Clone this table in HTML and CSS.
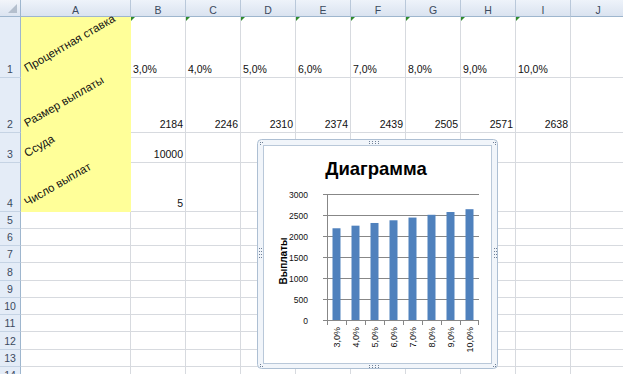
FILE: index.html
```html
<!DOCTYPE html>
<html lang="ru">
<head>
<meta charset="utf-8">
<title>Диаграмма</title>
<link rel="stylesheet" href="styles.css">
</head>
<body>
<div class="sheet">
  <div class="corner"></div>
  <div class="ch">A</div><div class="ch">B</div><div class="ch">C</div><div class="ch">D</div><div class="ch">E</div><div class="ch">F</div><div class="ch">G</div><div class="ch">H</div><div class="ch">I</div><div class="ch">J</div>

  <div class="rh">1</div>
  <div class="c y"><span class="rot">Процентная ставка</span></div>
  <div class="c f">3,0%</div><div class="c f">4,0%</div><div class="c f">5,0%</div><div class="c f">6,0%</div><div class="c f">7,0%</div><div class="c f">8,0%</div><div class="c f">9,0%</div><div class="c f">10,0%</div><div class="c"></div>

  <div class="rh">2</div>
  <div class="c y"><span class="rot">Размер выплаты</span></div>
  <div class="c r">2184</div><div class="c r">2246</div><div class="c r">2310</div><div class="c r">2374</div><div class="c r">2439</div><div class="c r">2505</div><div class="c r">2571</div><div class="c r">2638</div><div class="c"></div>

  <div class="rh">3</div>
  <div class="c y"><span class="rot">Ссуда</span></div>
  <div class="c r">10000</div><div class="c"></div><div class="c"></div><div class="c"></div><div class="c"></div><div class="c"></div><div class="c"></div><div class="c"></div><div class="c"></div>

  <div class="rh">4</div>
  <div class="c y"><span class="rot">Число выплат</span></div>
  <div class="c r">5</div><div class="c"></div><div class="c"></div><div class="c"></div><div class="c"></div><div class="c"></div><div class="c"></div><div class="c"></div><div class="c"></div>

  <div class="rh">5</div><div class="c"></div><div class="c"></div><div class="c"></div><div class="c"></div><div class="c"></div><div class="c"></div><div class="c"></div><div class="c"></div><div class="c"></div><div class="c"></div>
  <div class="rh">6</div><div class="c"></div><div class="c"></div><div class="c"></div><div class="c"></div><div class="c"></div><div class="c"></div><div class="c"></div><div class="c"></div><div class="c"></div><div class="c"></div>
  <div class="rh">7</div><div class="c"></div><div class="c"></div><div class="c"></div><div class="c"></div><div class="c"></div><div class="c"></div><div class="c"></div><div class="c"></div><div class="c"></div><div class="c"></div>
  <div class="rh">8</div><div class="c"></div><div class="c"></div><div class="c"></div><div class="c"></div><div class="c"></div><div class="c"></div><div class="c"></div><div class="c"></div><div class="c"></div><div class="c"></div>
  <div class="rh">9</div><div class="c"></div><div class="c"></div><div class="c"></div><div class="c"></div><div class="c"></div><div class="c"></div><div class="c"></div><div class="c"></div><div class="c"></div><div class="c"></div>
  <div class="rh">10</div><div class="c"></div><div class="c"></div><div class="c"></div><div class="c"></div><div class="c"></div><div class="c"></div><div class="c"></div><div class="c"></div><div class="c"></div><div class="c"></div>
  <div class="rh">11</div><div class="c"></div><div class="c"></div><div class="c"></div><div class="c"></div><div class="c"></div><div class="c"></div><div class="c"></div><div class="c"></div><div class="c"></div><div class="c"></div>
  <div class="rh">12</div><div class="c"></div><div class="c"></div><div class="c"></div><div class="c"></div><div class="c"></div><div class="c"></div><div class="c"></div><div class="c"></div><div class="c"></div><div class="c"></div>
  <div class="rh">13</div><div class="c"></div><div class="c"></div><div class="c"></div><div class="c"></div><div class="c"></div><div class="c"></div><div class="c"></div><div class="c"></div><div class="c"></div><div class="c"></div>
  <div class="rh">14</div><div class="c"></div><div class="c"></div><div class="c"></div><div class="c"></div><div class="c"></div><div class="c"></div><div class="c"></div><div class="c"></div><div class="c"></div><div class="c"></div>
</div>

<div class="chart">
  <svg class="chart-svg" width="242" height="231" viewBox="0 0 242 231">
    <rect class="frame-outer" x="0.5" y="0.5" width="240" height="229" rx="4"/>
    <rect class="frame-inner" x="6.5" y="6.5" width="228" height="218"/>
    <g class="handle">
      <rect x="3" y="3" width="1" height="1"/><rect x="5" y="3" width="1" height="1"/><rect x="3" y="5" width="1" height="1"/>
      <rect x="236" y="3" width="1" height="1"/><rect x="238" y="3" width="1" height="1"/><rect x="238" y="5" width="1" height="1"/>
      <rect x="3" y="227" width="1" height="1"/><rect x="3" y="225" width="1" height="1"/><rect x="5" y="227" width="1" height="1"/>
      <rect x="238" y="227" width="1" height="1"/><rect x="238" y="225" width="1" height="1"/><rect x="236" y="227" width="1" height="1"/>
      <rect x="112" y="2" width="1" height="1"/><rect x="115" y="2" width="1" height="1"/><rect x="118" y="2" width="1" height="1"/><rect x="121" y="2" width="1" height="1"/>
      <rect x="112" y="4" width="1" height="1"/><rect x="115" y="4" width="1" height="1"/><rect x="118" y="4" width="1" height="1"/><rect x="121" y="4" width="1" height="1"/>
      <rect x="112" y="226" width="1" height="1"/><rect x="115" y="226" width="1" height="1"/><rect x="118" y="226" width="1" height="1"/><rect x="121" y="226" width="1" height="1"/>
      <rect x="112" y="228" width="1" height="1"/><rect x="115" y="228" width="1" height="1"/><rect x="118" y="228" width="1" height="1"/><rect x="121" y="228" width="1" height="1"/>
      <rect x="2" y="109" width="1" height="1"/><rect x="2" y="112" width="1" height="1"/><rect x="2" y="115" width="1" height="1"/><rect x="2" y="118" width="1" height="1"/>
      <rect x="4" y="109" width="1" height="1"/><rect x="4" y="112" width="1" height="1"/><rect x="4" y="115" width="1" height="1"/><rect x="4" y="118" width="1" height="1"/>
      <rect x="237" y="109" width="1" height="1"/><rect x="237" y="112" width="1" height="1"/><rect x="237" y="115" width="1" height="1"/><rect x="237" y="118" width="1" height="1"/>
      <rect x="239" y="109" width="1" height="1"/><rect x="239" y="112" width="1" height="1"/><rect x="239" y="115" width="1" height="1"/><rect x="239" y="118" width="1" height="1"/>
    </g>

    <text class="title" x="119" y="36">Диаграмма</text>

    <g class="grid">
      <line x1="66" y1="55.5" x2="222" y2="55.5"/>
      <line x1="66" y1="76.5" x2="222" y2="76.5"/>
      <line x1="66" y1="97.5" x2="222" y2="97.5"/>
      <line x1="66" y1="118.5" x2="222" y2="118.5"/>
      <line x1="66" y1="139.5" x2="222" y2="139.5"/>
      <line x1="66" y1="160.5" x2="222" y2="160.5"/>
      <line x1="66" y1="181.5" x2="222" y2="181.5"/>
      <line x1="70.5" y1="55" x2="70.5" y2="182"/>
      <line x1="89.5" y1="181" x2="89.5" y2="186"/>
      <line x1="108.5" y1="181" x2="108.5" y2="186"/>
      <line x1="127.5" y1="181" x2="127.5" y2="186"/>
      <line x1="146.5" y1="181" x2="146.5" y2="186"/>
      <line x1="165.5" y1="181" x2="165.5" y2="186"/>
      <line x1="184.5" y1="181" x2="184.5" y2="186"/>
      <line x1="203.5" y1="181" x2="203.5" y2="186"/>
      <line x1="221.5" y1="181" x2="221.5" y2="186"/>
      <line x1="70.5" y1="181" x2="70.5" y2="186"/>
    </g>

    <g class="bars">
      <rect x="75.5" y="89.27" width="8" height="91.73"/>
      <rect x="94.5" y="86.67" width="8" height="94.33"/>
      <rect x="113.5" y="83.98" width="8" height="97.02"/>
      <rect x="132.5" y="81.29" width="8" height="99.71"/>
      <rect x="151.5" y="78.56" width="8" height="102.44"/>
      <rect x="170.5" y="75.79" width="8" height="105.21"/>
      <rect x="189.5" y="73.02" width="8" height="107.98"/>
      <rect x="208.5" y="70.2" width="8" height="110.8"/>
    </g>

    <g class="ylab">
      <text x="51" y="59">3000</text>
      <text x="51" y="80">2500</text>
      <text x="51" y="101">2000</text>
      <text x="51" y="122">1500</text>
      <text x="51" y="143">1000</text>
      <text x="51" y="164">500</text>
      <text x="51" y="185">0</text>
    </g>

    <text class="ytitle" transform="translate(30 122) rotate(-90)">Выплаты</text>

    <g class="xlab">
      <text transform="translate(82.7 188) rotate(-90)">3,0%</text>
      <text transform="translate(101.7 188) rotate(-90)">4,0%</text>
      <text transform="translate(120.7 188) rotate(-90)">5,0%</text>
      <text transform="translate(139.7 188) rotate(-90)">6,0%</text>
      <text transform="translate(158.7 188) rotate(-90)">7,0%</text>
      <text transform="translate(177.7 188) rotate(-90)">8,0%</text>
      <text transform="translate(196.7 188) rotate(-90)">9,0%</text>
      <text transform="translate(215.7 188) rotate(-90)">10,0%</text>
    </g>
  </svg>
</div>
</body>
</html>
```
FILE: styles.css
```css
html, body {
  margin: 0;
  padding: 0;
  background: #ffffff;
  overflow: hidden;
}

body {
  width: 623px;
  height: 374px;
  position: relative;
  font-family: "Liberation Sans", Arial, sans-serif;
}

.sheet {
  display: grid;
  grid-template-columns: 21px 110px repeat(9, 55px);
  grid-template-rows: 17px 61px 55px 30px 49px 17px 17px 17px 18px 17px 17px 17px 18px 17px 17px;
  width: 626px;
}

.sheet > div {
  box-sizing: border-box;
  font-size: 10.5px;
  line-height: 12px;
  white-space: nowrap;
}

.corner {
  position: relative;
  background: linear-gradient(#f2f5fa, #dbe4f1);
  border-right: 1px solid #9eb6ce;
  border-bottom: 1px solid #9eb6ce;
}

.corner::after {
  content: "";
  position: absolute;
  right: 3px;
  bottom: 3px;
  width: 0;
  height: 0;
  border-left: 9px solid transparent;
  border-bottom: 9px solid #b4bfcd;
}

.ch {
  display: flex;
  justify-content: center;
  align-items: center;
  padding-top: 3px;
  color: #3b4a5e;
  background: linear-gradient(#eef3fa, #dae3f0);
  border-right: 1px solid #b9c8da;
  border-bottom: 1px solid #9eb6ce;
}

.rh {
  display: flex;
  justify-content: center;
  align-items: flex-end;
  padding-bottom: 2px;
  color: #3b4a5e;
  background: #e4ecf7;
  border-right: 1px solid #9eb6ce;
  border-bottom: 1px solid #c5d3e4;
}

.c {
  position: relative;
  display: flex;
  align-items: flex-end;
  padding: 0 2px 2px 2px;
  color: #111111;
  border-right: 1px solid #d7dadf;
  border-bottom: 1px solid #d7dadf;
}

.c.r {
  justify-content: flex-end;
}

.c.f::before {
  content: "";
  position: absolute;
  left: 0;
  top: 0;
  width: 0;
  height: 0;
  border-top: 4px solid #2e8b2e;
  border-right: 4px solid transparent;
}

.c.y {
  background: #ffff99;
  border-right-color: #ffff99;
  border-bottom-color: #ffff99;
  padding: 0 0 3px 7px;
}

.rot {
  display: block;
  font-size: 11.5px;
  line-height: 12px;
  color: #111111;
  transform-origin: 0 100%;
  transform: rotate(-30deg);
}

.chart {
  position: absolute;
  left: 257px;
  top: 139px;
  width: 242px;
  height: 231px;
}

.chart-svg {
  display: block;
  font-family: "Liberation Sans", Arial, sans-serif;
}

.frame-outer {
  fill: #f1f5fa;
  stroke: #adbfd3;
  stroke-width: 1;
}

.frame-inner {
  fill: #ffffff;
  stroke: #b9c8d9;
  stroke-width: 1;
}

.handle rect {
  fill: #6f8097;
}

.title {
  font-size: 18.5px;
  font-weight: bold;
  fill: #000000;
  text-anchor: middle;
}

.grid line {
  stroke: #878787;
  stroke-width: 1;
}

.bars rect {
  fill: #4f81bd;
}

.ylab text {
  font-size: 8.5px;
  fill: #111111;
  text-anchor: end;
}

.ytitle {
  font-size: 10px;
  font-weight: bold;
  fill: #000000;
  text-anchor: middle;
}

.xlab text {
  font-size: 9px;
  fill: #111111;
  text-anchor: end;
}
```
